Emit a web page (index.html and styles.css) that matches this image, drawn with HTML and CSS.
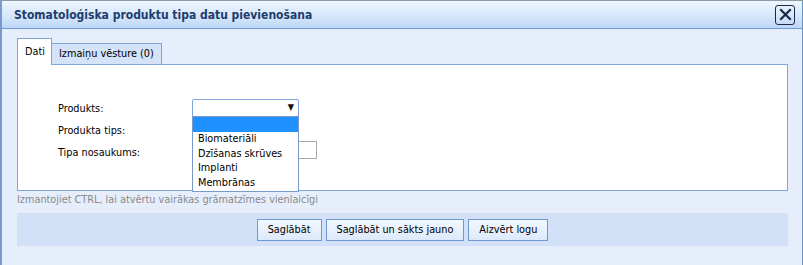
FILE: index.html
```html
<!DOCTYPE html>
<html lang="lv">
<head>
  <meta charset="UTF-8">
  <title>Stomatoloģiska produktu tipa datu pievienošana</title>
  <link rel="stylesheet" href="styles.css">
</head>
<body>
  <!-- Dialog window -->
  <div class="dialog">
    <div class="dialog-title">
      <span class="title-text">Stomatoloģiska produktu tipa datu pievienošana</span>
      <button class="close-btn" title="Aizvērt">
        <svg width="13" height="13" viewBox="0 0 13 13">
          <path d="M2 2 L11 11 M11 2 L2 11" stroke="#1b2a48" stroke-width="2.2" stroke-linecap="square"/>
        </svg>
      </button>
    </div>

    <div class="dialog-body">
      <!-- Tabs -->
      <div class="tabs">
        <div class="tab active">Dati</div>
        <div class="tab">Izmaiņu vēsture (0)</div>
      </div>

      <div class="tab-panel">
        <div class="form-grid">
          <label>Produkts:</label>
          <div class="field">
            <div class="select">
              <span class="arrow">&#9660;</span>
            </div>
            <!-- Open dropdown list -->
            <ul class="dropdown">
              <li class="selected">&nbsp;</li>
              <li>Biomateriāli</li>
              <li>Dzīšanas skrūves</li>
              <li>Implanti</li>
              <li>Membrānas</li>
            </ul>
          </div>

          <label>Produkta tips:</label>
          <div class="field"></div>

          <label>Tipa nosaukums:</label>
          <div class="field"><input type="text" class="text-input"></div>
        </div>
      </div>

      <div class="hint">Izmantojiet CTRL, lai atvērtu vairākas grāmatzīmes vienlaicīgi</div>

      <div class="button-bar">
        <button class="btn">Saglābāt</button>
        <button class="btn">Saglābāt un sākts jauno</button>
        <button class="btn">Aizvērt logu</button>
      </div>
    </div>
  </div>
</body>
</html>
```

FILE: styles.css
```css
/* Page */
body {
  margin: 0;
  background-color: #8d98a8;
  font-family: "DejaVu Sans Condensed", "DejaVu Sans", sans-serif;
  font-size: 10.8px;
  color: #000;
}

/* Dialog frame */
.dialog {
  margin-top: 1px;
  width: 800px;
  height: 264px;
  overflow: hidden;
  border-left: 2px solid #7a9bc9;
  border-right: 1px solid #6c93cc;
  background-color: #e7eefb;
}

.dialog-title {
  height: 27px;
  display: flex;
  align-items: center;
  justify-content: space-between;
  padding: 0 7px 0 12px;
  background: linear-gradient(to bottom, #eef5fd 0%, #d8e8fb 50%, #bed7f6 100%);
  border-bottom: 1px solid #6f9bd6;
}

.title-text {
  font-family: "DejaVu Sans Condensed", "DejaVu Sans", sans-serif;
  font-weight: bold;
  font-size: 12px;
  color: #1d3c6e;
}

.close-btn {
  width: 20px;
  height: 20px;
  padding: 0;
  border: 1.5px solid #1b2a48;
  border-radius: 3px;
  background: transparent;
  display: flex;
  align-items: center;
  justify-content: center;
}

.dialog-body {
  padding: 10px 14px 0 15px;
}

/* Tabs */
.tabs {
  display: flex;
  align-items: flex-end;
  height: 26px;
  position: relative;
  z-index: 1;
  margin-bottom: -1px;
}

.tab {
  height: 20px;
  line-height: 20px;
  padding: 0 7px;
  border: 1px solid #7ea6dc;
  border-left: none;
  background-color: #d4e3f8;
  color: #000;
}

.tab.active {
  height: 26px;
  line-height: 26px;
  padding: 0 6px 0 7px;
  border-left: 1px solid #7ea6dc;
  border-bottom: none;
  background-color: #fff;
}

.tab-panel {
  height: 125px;
  background-color: #fff;
  border: 1px solid #7ea6dc;
}

/* Form */
.form-grid {
  display: grid;
  grid-template-columns: 134px 200px;
  grid-auto-rows: 22px;
  padding: 32px 0 0 40px;
  align-items: center;
}

.field {
  position: relative;
  height: 18px;
}

.select {
  width: 105px;
  height: 16px;
  border: 1px solid #7ea6dc;
  border-radius: 2px;
  background-color: #fff;
  position: relative;
}

.arrow {
  position: absolute;
  right: 4px;
  top: 2px;
  font-size: 9px;
  color: #111;
}

.text-input {
  width: 125px;
  height: 18px;
  margin: -2px 0 0 0;
  padding: 0;
  border: 1px solid #a9a9a9;
  box-sizing: border-box;
}

/* Dropdown lies over the rows below it */
.dropdown {
  position: absolute;
  top: 17px;
  left: 0;
  width: 105px;
  margin: 0;
  padding: 0 0 1px 0;
  list-style: none;
  background-color: #fff;
  border: 1px solid #7a98c8;
  z-index: 2;
}

.dropdown li {
  height: 14.5px;
  line-height: 14.5px;
  padding-left: 5px;
}

.dropdown li.selected {
  height: 15px;
  background-color: #1e90ff;
}

.hint {
  padding: 2px 0 0 0;
  height: 20px;
  color: #8a8a8a;
}

/* Button bar */
.button-bar {
  height: 33px;
  display: flex;
  align-items: center;
  justify-content: center;
  gap: 4px;
  background-color: #d2e1f8;
}

.btn {
  height: 22px;
  padding: 0 10px;
  font-family: "DejaVu Sans Condensed", "DejaVu Sans", sans-serif;
  font-size: 10.8px;
  color: #000;
  border: 1px solid #6e99d0;
  background: linear-gradient(to bottom, #f3f8fe 0%, #dce9fb 100%);
  cursor: pointer;
}
```
